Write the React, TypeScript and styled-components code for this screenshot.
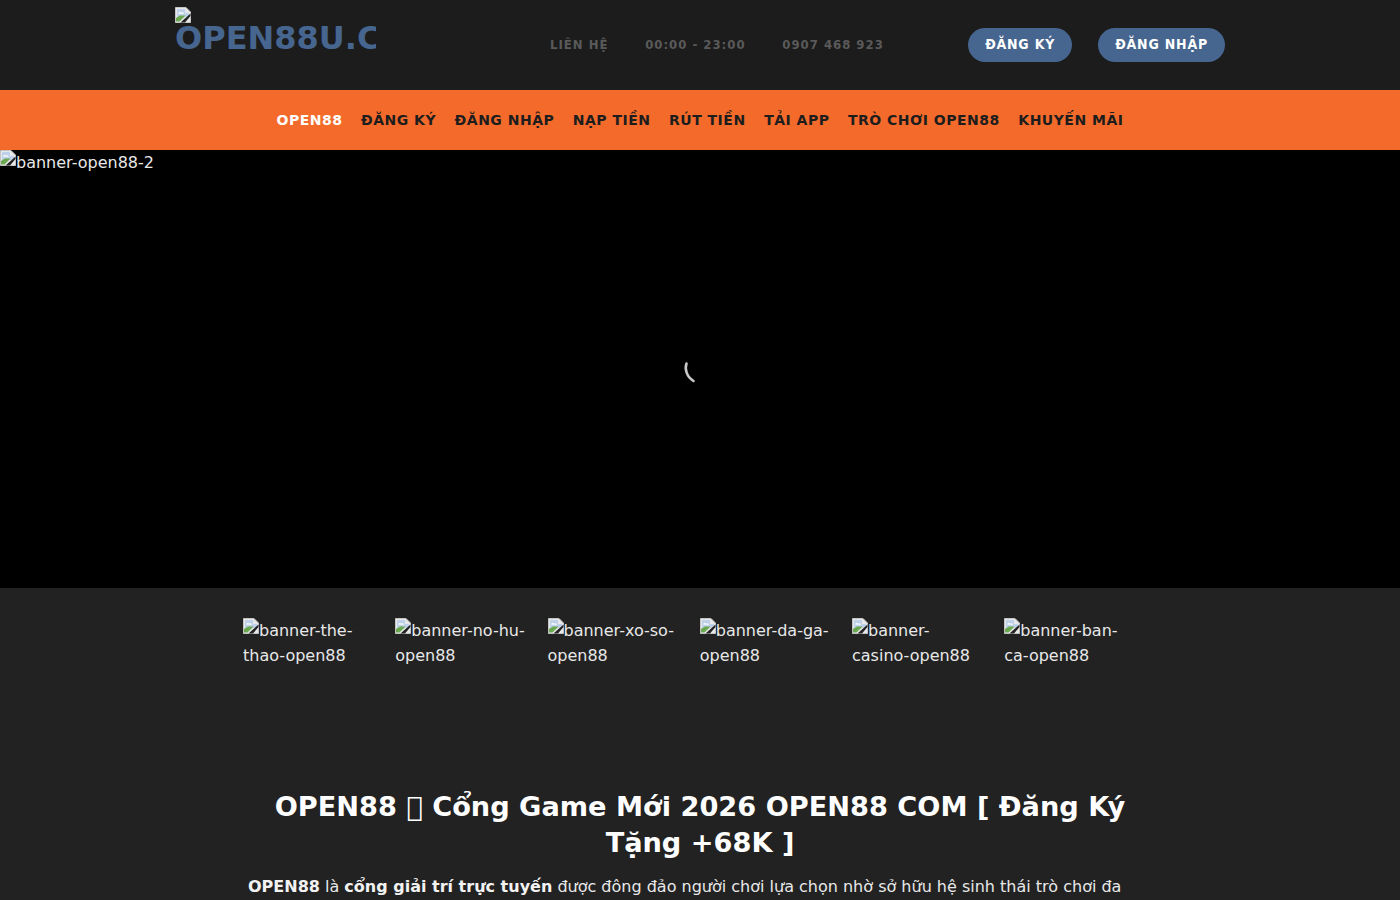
import styled, { createGlobalStyle } from "styled-components";

const GlobalStyle = createGlobalStyle`
  html, body {
    margin: 0;
    padding: 0;
    background: #222222;
    color: #e8e8e8;
    font-family: "DejaVu Sans", "Noto Sans CJK SC", sans-serif;
    overflow: hidden;
  }
`;

const Page = styled.div`
  width: 1400px;
  height: 900px;
  overflow: hidden;
`;

const HeaderBar = styled.header`
  height: 90px;
  background: #1c1c1c;
  display: flex;
  justify-content: center;
`;

const HeaderInner = styled.div`
  width: 1050px;
  display: flex;
  align-items: flex-start;
`;

const Logo = styled.a`
  width: 201px;
  height: 70px;
  margin-top: 7px;
  overflow: hidden;
  display: block;
`;

const LogoIcon = styled.div`
  height: 16px;
  line-height: 0;
`;

const LogoText = styled.div`
  color: #46658f;
  font-size: 32px;
  font-weight: 700;
  line-height: 30px;
  white-space: nowrap;
`;

const ContactList = styled.div`
  margin: 37px 0 0 174px;
  display: flex;
  gap: 36.7px;
  width: 333px;
`;

const ContactItem = styled.span`
  color: #5a5a5a;
  font-family: "DejaVu Sans Condensed", "DejaVu Sans", sans-serif;
  font-size: 13px;
  font-weight: 700;
  line-height: 15px;
  letter-spacing: 1px;
  white-space: nowrap;
`;

const Actions = styled.div`
  margin: 28px 0 0 auto;
  display: flex;
  gap: 26px;
`;

const PillButton = styled.a`
  height: 34px;
  padding: 0 17px;
  border-radius: 17px;
  background: #46658f;
  color: #ffffff;
  font-family: "DejaVu Sans Condensed", "DejaVu Sans", sans-serif;
  font-size: 14px;
  font-weight: 700;
  line-height: 32px;
  letter-spacing: 0.8px;
  white-space: nowrap;
`;

const NavBar = styled.nav`
  height: 60px;
  background: #f36a2a;
  display: flex;
  justify-content: center;
  align-items: center;
  gap: 18.5px;
`;

const NavLink = styled.a<{ $active?: boolean }>`
  color: ${(p) => (p.$active ? "#ffffff" : "#1d1d1d")};
  font-size: 14px;
  font-weight: 700;
  letter-spacing: 0.5px;
  white-space: nowrap;
`;

const Banner = styled.section`
  position: relative;
  height: 438px;
  background: #000000;
  font-size: 16px;
  line-height: 25px;
`;

const Spinner = styled.svg`
  position: absolute;
  left: 680px;
  top: 207px;
`;

const Thumbs = styled.section`
  width: 913.5px;
  margin: 30px 0 0 243px;
  display: grid;
  grid-template-columns: repeat(6, 1fr);
  height: 171px;
`;

const Thumb = styled.div`
  padding-right: 20px;
  font-size: 16px;
  line-height: 25px;
`;

const Content = styled.main`
  width: 904px;
  margin: 0 auto;
`;

const Title = styled.h1`
  margin: 0 0 13px;
  color: #ffffff;
  font-size: 27.2px;
  font-weight: 700;
  line-height: 36px;
  text-align: center;
`;

const Paragraph = styled.p`
  margin: 0;
  font-size: 16px;
  line-height: 25px;

  strong {
    font-weight: 700;
    color: #f2f2f2;
  }
`;

const BrokenIcon = styled.svg`
  vertical-align: 2px;
`;

const BrokenImage = () => (
  <BrokenIcon width="16" height="16" viewBox="0 0 16 16">
    <path d="M0.5 0.5H11L15.5 5V15.5H0.5Z" fill="#e8e8e8" stroke="#c4c4c4" />
    <path d="M2 2H10V6H14V9.5L2 11Z" fill="#bfd0ea" />
    <path d="M3 6.5q1.5-2.4 3.2-.8q1.6-1 2.8 1Z" fill="#ffffff" />
    <path d="M1 14.5V11L5 8.5L10.5 8.5L4.5 14.5Z" fill="#6aa84f" />
    <path d="M5.5 15.5L15.5 6.5V9L10 15.5Z" fill="#222222" />
  </BrokenIcon>
);

const navItems = [
  "OPEN88",
  "ĐĂNG KÝ",
  "ĐĂNG NHẬP",
  "NẠP TIỀN",
  "RÚT TIỀN",
  "TẢI APP",
  "TRÒ CHƠI OPEN88",
  "KHUYẾN MÃI",
];

const thumbs = [
  "banner-the-thao-open88",
  "banner-no-hu-open88",
  "banner-xo-so-open88",
  "banner-da-ga-open88",
  "banner-casino-open88",
  "banner-ban-ca-open88",
];

const App = () => (
  <Page>
    <GlobalStyle />
    <HeaderBar>
      <HeaderInner>
        <Logo>
          <LogoIcon>
            <BrokenImage />
          </LogoIcon>
          <LogoText>OPEN88U.COM</LogoText>
        </Logo>
        <ContactList>
          <ContactItem>LIÊN HỆ</ContactItem>
          <ContactItem>00:00 - 23:00</ContactItem>
          <ContactItem>0907 468 923</ContactItem>
        </ContactList>
        <Actions>
          <PillButton>ĐĂNG KÝ</PillButton>
          <PillButton>ĐĂNG NHẬP</PillButton>
        </Actions>
      </HeaderInner>
    </HeaderBar>
    <NavBar>
      {navItems.map((item, i) => (
        <NavLink key={item} $active={i === 0}>
          {item}
        </NavLink>
      ))}
    </NavBar>
    <Banner>
      <BrokenImage />
      banner-open88-2
      <Spinner width="40" height="30" viewBox="0 0 40 30">
        <path d="M6.5 6.5C4.5 12 6.5 19.5 13.5 24" fill="none" stroke="#c8c8c8" strokeWidth="2.6" strokeLinecap="round" />
      </Spinner>
    </Banner>
    <Thumbs>
      {thumbs.map((alt) => (
        <Thumb key={alt}>
          <BrokenImage />
          {alt}
        </Thumb>
      ))}
    </Thumbs>
    <Content>
      <Title>OPEN88 {"\u{10FFFD}"} Cổng Game Mới 2026 OPEN88 COM [ Đăng Ký Tặng +68K ]</Title>
      <Paragraph>
        <strong>OPEN88</strong> là <strong>cổng giải trí trực tuyến</strong> được đông đảo người chơi lựa chọn nhờ sở hữu hệ sinh thái trò chơi đa dạng
      </Paragraph>
    </Content>
  </Page>
);

export default App;
